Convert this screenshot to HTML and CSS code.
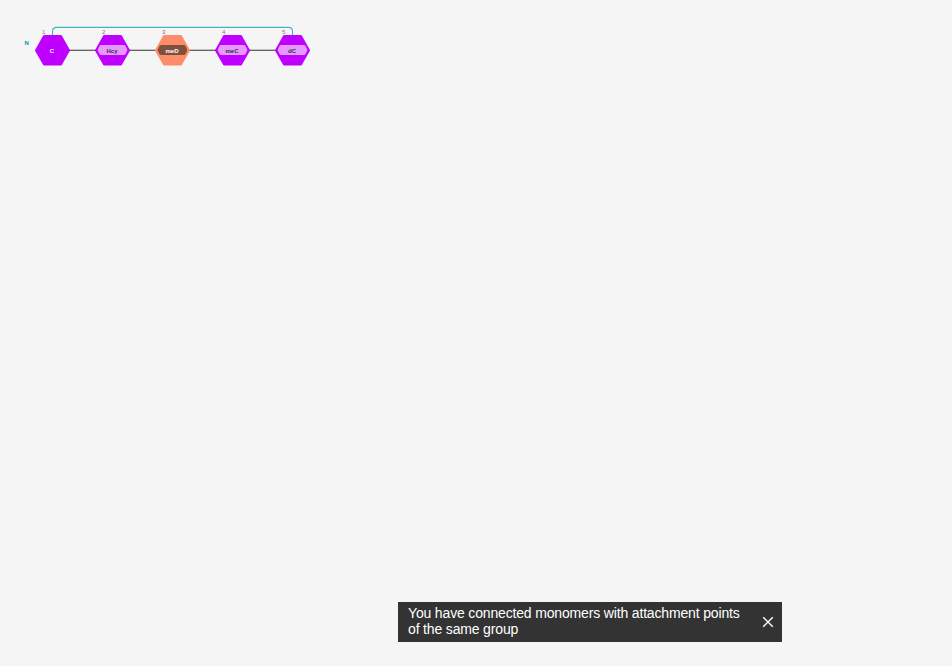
FILE: index.html
```html
<!DOCTYPE html>
<html lang="en">
<head>
<meta charset="utf-8">
<title>Sequence canvas</title>
<link rel="stylesheet" href="styles.css">
</head>
<body>
<main class="editor">
  <svg class="canvas" width="952" height="590" viewBox="0 0 952 590">
    <defs>
      <path id="hexagon" d="M-8.500 -15.500H8.500Q9 -15.500 9.300 -15L17.300 -.8Q17.600 -.2 17.300 .4L9.300 14.600Q9 15 8.500 15H-8.500Q-9 15 -9.300 14.600L-17.300 .4Q-17.600 -.2 -17.300 -.8L-9.300 -15Q-9 -15.500 -8.500 -15.500Z"/>
      <path id="plate" d="M-11.500 -5H11.500Q12.500 -5 13 -4L14.600 -.7Q14.900 0 14.600 .7L13 4Q12.500 5 11.500 5H-11.500Q-12.500 5 -13 4L-14.600 .7Q-14.900 0 -14.600 -.7L-13 -4Q-12.500 -5 -11.500 -5Z"/>
    </defs>
    <path class="bond" d="M52.500 50.300H292.500"/>
    <path class="bridge" d="M52.500 36V31.500Q52.500 27.400 56.500 27.400H288.500Q292.500 27.400 292.500 31.500V36"/>
    <text class="terminal" x="24.500" y="45">N</text>
    <g transform="translate(52.500 50.500)">
      <use href="#hexagon" class="violet"/>
      <text class="label light" x="-.5" y="2.300">C</text>
      <text class="index" x="-10.500" y="-16.500">1</text>
    </g>
    <g transform="translate(112.500 50.500)">
      <use href="#hexagon" class="violet"/>
      <use href="#plate" class="plate-light" y="-.5"/>
      <text class="label" x="-.5" y="2.300">Hcy</text>
      <text class="index" x="-10.500" y="-16.500">2</text>
    </g>
    <g transform="translate(172.500 50.500)">
      <use href="#hexagon" class="coral"/>
      <use href="#plate" class="plate-dark" y="-.5"/>
      <text class="label light" x="-.5" y="2.300">meD</text>
      <text class="index" x="-10.500" y="-16.500">3</text>
    </g>
    <g transform="translate(232.500 50.500)">
      <use href="#hexagon" class="violet"/>
      <use href="#plate" class="plate-light" y="-.5"/>
      <text class="label" x="-.5" y="2.300">meC</text>
      <text class="index" x="-10.500" y="-16.500">4</text>
    </g>
    <g transform="translate(292.500 50.500)">
      <use href="#hexagon" class="violet"/>
      <use href="#plate" class="plate-light" y="-.5"/>
      <text class="label" x="-.5" y="2.300">dC</text>
      <text class="index" x="-10.500" y="-16.500">5</text>
    </g>
  </svg>
  <div class="toast" role="alert">
    <p class="message">You have connected monomers with attachment points of the same group</p>
    <button class="close" aria-label="Close">
      <svg width="12" height="12" viewBox="0 0 12 12"><path d="M1.200 1.200L10.800 10.800M10.800 1.200L1.200 10.800"/></svg>
    </button>
  </div>
</main>
</body>
</html>
```

FILE: styles.css
```css
body {
  margin: 0;
  background: #f5f5f5;
  font-family: "Liberation Sans", Arial, sans-serif;
}

.editor {
  display: flex;
  flex-direction: column;
  justify-content: space-between;
  height: 666px;
  box-sizing: border-box;
  padding-bottom: 24px;
}

.canvas { display: block; }

.bond { stroke: #333; stroke-width: 1.1; fill: none; }
.bridge { stroke: #43b5c0; stroke-width: 1.1; fill: none; }

.terminal { font-size: 6px; font-weight: 700; fill: #0097a8; }
.label { font-size: 6px; font-weight: 700; fill: #333; text-anchor: middle; }
.light { fill: #fff; }
.index { font-size: 6px; fill: #7c7c7f; }

.violet { fill: #bf00ff; }
.coral { fill: #ff8c69; }
.plate-light { fill: #e598ff; }
.plate-dark { fill: #80503f; }

.toast {
  display: flex;
  align-items: center;
  justify-content: space-between;
  box-sizing: border-box;
  width: 384px;
  height: 40px;
  margin-left: 398px;
  padding: 0 8px 0 10px;
  background: #333;
  color: #fff;
}

.message {
  width: 345px;
  margin: 0;
  padding-bottom: 2px;
  font-size: 14px;
  letter-spacing: -0.16px;
  line-height: 16px;
}

.close {
  display: flex;
  padding: 0;
  border: 0;
  background: none;
}

.close path { stroke: #fff; stroke-width: 1.4; fill: none; }
```
